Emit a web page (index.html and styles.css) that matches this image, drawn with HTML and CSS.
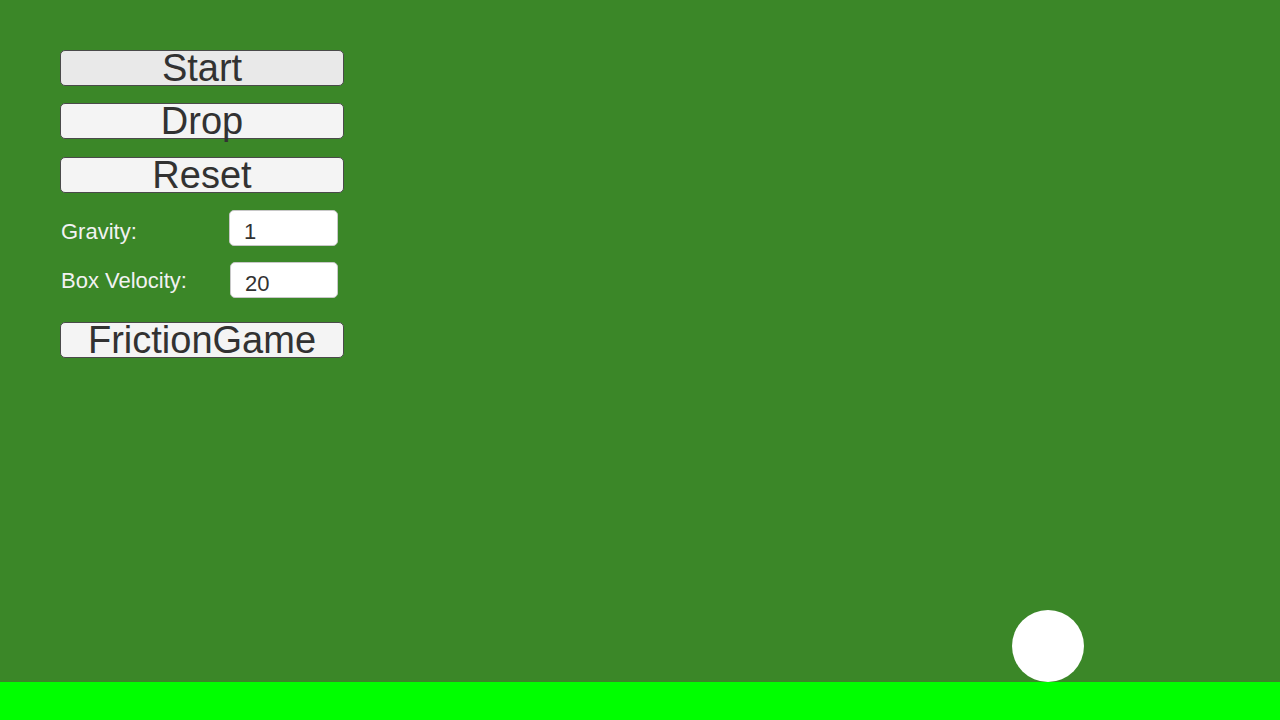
FILE: index.html
```html
<!DOCTYPE html>
<html>
<head>
<meta charset="utf-8">
<link rel="stylesheet" href="styles.css">
</head>
<body>
<div class="scene">
  <div class="panel">
    <div class="btn btn-start">Start</div>
    <div class="btn btn-drop">Drop</div>
    <div class="btn btn-reset">Reset</div>
    <div class="field field-gravity">
      <span class="label label-gravity">Gravity:</span>
      <div class="input input-gravity">1</div>
    </div>
    <div class="field field-velocity">
      <span class="label label-velocity">Box Velocity:</span>
      <div class="input input-velocity">20</div>
    </div>
    <div class="btn btn-friction">FrictionGame</div>
  </div>
  <div class="ball"></div>
  <div class="ground"></div>
</div>
</body>
</html>
```
FILE: styles.css
```css
html, body {
  margin: 0;
  padding: 0;
  width: 1280px;
  height: 720px;
  overflow: hidden;
}
body {
  background: #3b8728;
  font-family: "Liberation Sans", Arial, sans-serif;
}
.scene {
  position: relative;
  width: 1280px;
  height: 720px;
  display: flex;
  flex-direction: column;
}
.panel {
  flex: 1;
  display: flex;
  flex-direction: column;
  align-items: flex-start;
  padding: 50px 0 0 60px;
}
.btn {
  box-sizing: border-box;
  width: 284px;
  height: 36px;
  background: #f4f4f4;
  border: 1px solid #4a4a4a;
  border-radius: 5px;
  color: #323232;
  font-size: 38px;
  line-height: 35px;
  text-align: center;
}
.btn-start { background: #e9e9e9; }
.btn-drop { margin-top: 17px; }
.btn-reset { margin-top: 18px; }
.btn-friction { margin-top: 24px; }
.field {
  display: flex;
  align-items: center;
  width: 284px;
  height: 36px;
}
.field-gravity { margin-top: 17px; }
.field-velocity { margin-top: 16px; }
.label {
  width: 168px;
  color: #f2f2f2;
  font-size: 22px;
  padding-left: 1px;
}
.label-gravity { padding-top: 8px; }
.label-velocity { padding-top: 2px; }
.input {
  box-sizing: border-box;
  width: 109px;
  height: 36px;
  background: #ffffff;
  border: 1px solid #c8c8c8;
  border-radius: 5px;
  color: #323232;
  font-size: 22px;
  line-height: 34px;
  padding: 4px 0 0 14px;
}
.input-velocity { margin-left: 1px; width: 108px; }
.ball {
  position: absolute;
  left: 1012px;
  top: 610px;
  width: 72px;
  height: 72px;
  border-radius: 50%;
  background: #ffffff;
}
.ground {
  height: 38px;
  background: #00ff00;
}
```
